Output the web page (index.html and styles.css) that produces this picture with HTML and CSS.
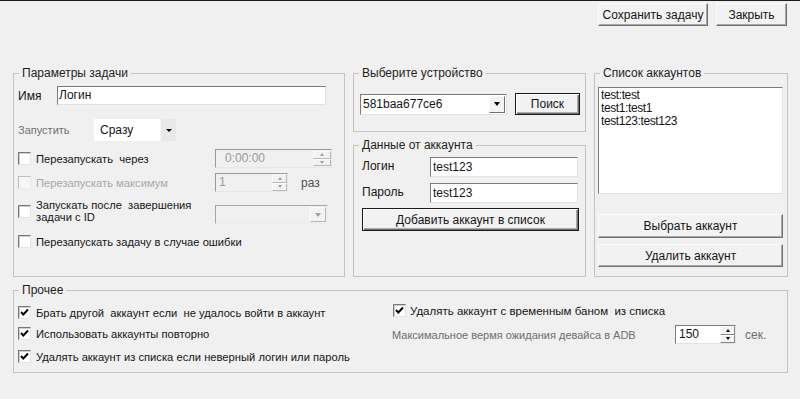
FILE: index.html
```html
<!DOCTYPE html>
<html lang="ru">
<head>
    <meta charset="UTF-8">
    <title>Параметры задачи</title>
    <link rel="stylesheet" href="styles.css">
</head>
<body>
    <div class="toolbar">
        <button class="btn save">Сохранить задачу</button>
        <button class="btn close">Закрыть</button>
    </div>

    <div class="main">
        <!-- Task settings -->
        <fieldset class="group task">
            <legend>Параметры задачи</legend>
            <div class="name-row">
                <span class="lbl">Имя</span>
                <div class="field name-field">Логин</div>
            </div>
            <div class="start-row">
                <span class="lbl muted">Запустить</span>
                <div class="combo flat"><span class="val">Сразу</span><span class="drop"><i class="tri"></i></span></div>
            </div>
            <div class="opts">
                <div class="opt"><span class="check"></span><span>Перезапускать&nbsp; через</span></div>
                <div class="spin w117 disabled"><span class="val pad">0:00:00</span><span class="arrows small"><i class="up"></i><i class="dn"></i></span></div>

                <div class="opt disabled"><span class="check disabled"></span><span>Перезапускать максимум</span></div>
                <div class="spin-line">
                    <div class="spin w73 disabled"><span class="val">1</span><span class="arrows"><i class="up"></i><i class="dn"></i></span></div>
                    <span class="unit">раз</span>
                </div>

                <div class="opt two"><span class="check"></span><span>Запускать после&nbsp; завершения<br>задачи с ID</span></div>
                <div class="combo w113 disabled"><span class="val"></span><span class="drop btnlike"><i class="tri"></i></span></div>

                <div class="opt last"><span class="check"></span><span>Перезапускать задачу в случае ошибки</span></div>
            </div>
        </fieldset>

        <div class="col">
            <fieldset class="group device">
                <legend>Выберите устройство</legend>
                <div class="device-row">
                    <div class="combo w147"><span class="val">581baa677ce6</span><span class="drop btnlike"><i class="tri"></i></span></div>
                    <button class="btn default search">Поиск</button>
                </div>
            </fieldset>
            <fieldset class="group account">
                <legend>Данные от аккаунта</legend>
                <div class="acc-row first">
                    <span class="lbl">Логин</span>
                    <div class="field acc-field">test123</div>
                </div>
                <div class="acc-row">
                    <span class="lbl">Пароль</span>
                    <div class="field acc-field">test123</div>
                </div>
                <button class="btn default add">Добавить аккаунт в список</button>
            </fieldset>
        </div>

        <fieldset class="group accounts">
            <legend>Список аккаунтов</legend>
            <div class="listbox">
                <div>test:test</div>
                <div>test1:test1</div>
                <div>test123:test123</div>
            </div>
            <button class="btn wide pick">Выбрать аккаунт</button>
            <button class="btn wide remove">Удалить аккаунт</button>
        </fieldset>
    </div>

    <!-- Misc -->
    <fieldset class="group other">
        <legend>Прочее</legend>
        <div class="other-grid">
            <div class="other-left">
                <div class="opt r1"><span class="check on"><svg width="11" height="11" viewBox="0 0 11 11"><polyline points="2,5 4.3,7.5 9,2.5" fill="none" stroke="#000" stroke-width="1.9"/></svg></span><span>Брать другой&nbsp; аккаунт если&nbsp; не удалось войти в аккаунт</span></div>
                <div class="opt r2"><span class="check on"><svg width="11" height="11" viewBox="0 0 11 11"><polyline points="2,5 4.3,7.5 9,2.5" fill="none" stroke="#000" stroke-width="1.9"/></svg></span><span>Использовать аккаунты повторно</span></div>
                <div class="opt r3"><span class="check on"><svg width="11" height="11" viewBox="0 0 11 11"><polyline points="2,5 4.3,7.5 9,2.5" fill="none" stroke="#000" stroke-width="1.9"/></svg></span><span>Удалять аккаунт из списка если неверный логин или пароль</span></div>
            </div>
            <div class="other-right">
                <div class="opt r1"><span class="check on"><svg width="11" height="11" viewBox="0 0 11 11"><polyline points="2,5 4.3,7.5 9,2.5" fill="none" stroke="#000" stroke-width="1.9"/></svg></span><span>Удалять аккаунт с временным баном&nbsp; из списка</span></div>
                <div class="wait-row">
                    <span class="wait-lbl">Максимальное вермя ожидания девайса в ADB</span>
                    <div class="spin w61"><span class="val">150</span><span class="arrows"><i class="up"></i><i class="dn"></i></span></div>
                    <span class="unit sec">сек.</span>
                </div>
            </div>
        </div>
    </fieldset>
</body>
</html>
```

FILE: styles.css
```css
* {
    box-sizing: border-box;
}
body {
    margin: 0;
    height: 399px;
    overflow: hidden;
    background: #f0f0f0;
    border-top: 1px solid #1c1c1c;
    font-family: 'Liberation Sans', Arial, sans-serif;
    font-size: 11px;
    color: #151515;
}
.toolbar {
    display: flex;
    justify-content: flex-end;
    gap: 8px;
    padding: 2px 13px 0 0;
}
.btn {
    font: inherit;
    font-size: 12px;
    color: inherit;
    height: 23px;
    padding: 0;
    background: #f2f2f2;
    border: 1px solid;
    border-color: #fbfbfb #6f6f6f #6f6f6f #fbfbfb;
    box-shadow: inset -1px -1px 0 #a9a9a9;
}
.btn.default {
    border-color: #1a1a1a;
    box-shadow: inset 1px 1px 0 #fff, inset -1px -1px 0 #6f6f6f, inset -2px -2px 0 #a9a9a9;
}
.save { width: 110px; }
.close { width: 71px; }

/* Group boxes */
.group {
    margin: 0;
    padding: 0 4px 4px;
    border: 1px solid #c3c3c3;
    min-width: 0;
}
.group legend {
    padding: 0 3px;
    margin-left: 1px;
    line-height: 14px;
    font-size: 12px;
    color: #1e1e1e;
}
.main {
    display: grid;
    grid-template-columns: 332px 233px 194px;
    column-gap: 8px;
    margin: 40px 0 0 13px;
    height: 211px;
}
.col {
    display: flex;
    flex-direction: column;
    gap: 6px;
}
.device {
    height: 66px;
    flex: none;
}
.account {
    flex: 1;
}

/* Fields */
.field {
    background: #fff;
    border: 1px solid;
    border-color: #7a7a7a #e2e2e2 #e2e2e2 #7a7a7a;
    padding: 0 2px;
    white-space: nowrap;
    font-size: 12px;
}
.lbl {
    flex: none;
    font-size: 12px;
}
.muted {
    color: #707070;
}
.name-row {
    display: flex;
    align-items: center;
    margin-top: 6px;
}
.name-row .lbl {
    width: 39px;
}
.name-field {
    width: 269px;
    height: 19px;
    line-height: 17px;
    padding-left: 1px;
}
.start-row {
    display: flex;
    align-items: center;
    margin-top: 14px;
}
.start-row .lbl {
    width: 76px;
    font-size: 11px;
}

/* Combo boxes */
.combo {
    display: flex;
    height: 21px;
    background: #fff;
    border: 1px solid;
    border-color: #7a7a7a #e2e2e2 #e2e2e2 #7a7a7a;
}
.combo .val {
    flex: 1;
    line-height: 19px;
    padding-left: 2px;
    white-space: nowrap;
    font-size: 12px;
}
.combo .drop {
    width: 16px;
    display: flex;
    align-items: center;
    justify-content: center;
}
.drop.btnlike {
    margin: 1px;
    background: #f2f2f2;
    border: 1px solid;
    border-color: #fbfbfb #6f6f6f #6f6f6f #fbfbfb;
}
.tri {
    width: 0;
    height: 0;
    border-left: 3.5px solid transparent;
    border-right: 3.5px solid transparent;
    border-top: 4px solid #000;
}
.combo.flat {
    width: 82px;
    height: 22px;
    border: none;
}
.combo.flat .val {
    line-height: 22px;
    padding-left: 6px;
}
.combo.flat .drop {
    background: #e9e9e9;
    border-left: 1px solid #f7f7f7;
}
.combo.flat .tri {
    border-left-width: 3px;
    border-right-width: 3px;
    border-top-width: 3px;
}
.combo.disabled {
    background: #f0f0f0;
    border-color: #a6a6a6 #ececec #ececec #a6a6a6;
}
.combo.disabled .drop {
    border-color: #fbfbfb #b5b5b5 #b5b5b5 #fbfbfb;
}
.combo.disabled .tri {
    border-top-color: #a0a0a0;
}
.w113 { width: 113px; height: 19px; margin-top: 5px; }
.w147 { width: 147px; }

/* Options grid */
.opts {
    display: grid;
    grid-template-columns: 197px auto;
    grid-template-rows: 19px 19px 30px 19px;
    row-gap: 5px;
    margin-top: 8px;
    align-items: center;
}
.opt {
    display: flex;
    align-items: center;
    gap: 5px;
    white-space: nowrap;
    font-size: 11.2px;
}
.opt.disabled {
    color: #a8a8a8;
}
.opt.two {
    line-height: 12px;
    margin-top: -2px;
}
.opt.last {
    grid-column: 1 / 3;
}
.check {
    width: 13px;
    height: 13px;
    flex: none;
    background: #fff;
    border: 1px solid;
    border-color: #777 #e4e4e4 #e4e4e4 #777;
    box-shadow: inset 1px 1px 0 #cfcfcf;
}
.check.disabled {
    border-color: #bdbdbd #ececec #ececec #bdbdbd;
    box-shadow: none;
    background: #f6f6f6;
}
.check svg {
    display: block;
}

/* Spinners */
.spin {
    display: flex;
    height: 19px;
    background: #fff;
    border: 1px solid;
    border-color: #7a7a7a #e2e2e2 #e2e2e2 #7a7a7a;
}
.spin .val {
    flex: 1;
    line-height: 17px;
    padding-left: 3px;
    font-size: 12px;
}
.spin .val.pad {
    padding-left: 9px;
}
.spin.disabled {
    background: #f0f0f0;
    border-color: #9a9a9a #e8e8e8 #e8e8e8 #9a9a9a;
    color: #9a9a9a;
}
.arrows {
    width: 15px;
    display: flex;
    flex-direction: column;
}
.arrows i {
    flex: 1;
    display: flex;
    align-items: center;
    justify-content: center;
    background: #f2f2f2;
    border: 1px solid;
    border-color: #fbfbfb #8a8a8a #8a8a8a #fbfbfb;
}
.arrows i::before {
    content: '';
    border-left: 2.5px solid transparent;
    border-right: 2.5px solid transparent;
}
.arrows .up::before {
    border-bottom: 3px solid #000;
}
.arrows .dn::before {
    border-top: 3px solid #000;
}
.spin.disabled .arrows i {
    border-color: #fbfbfb #b8b8b8 #b8b8b8 #fbfbfb;
}
.spin.disabled .arrows i::before {
    border-top-color: #a0a0a0;
    border-bottom-color: #a0a0a0;
}
.arrows.small {
    width: 18px;
    padding: 1px 0;
}
.w117 { width: 117px; }
.w73 { width: 73px; }
.w61 { width: 61px; }
.spin-line {
    display: flex;
    align-items: center;
    gap: 13px;
}
.unit {
    color: #505050;
    font-size: 12px;
}

/* Device */
.device-row {
    display: flex;
    align-items: center;
    gap: 8px;
    margin: 13px 0 0 2px;
}
.search {
    width: 65px;
    height: 22px;
}

/* Account data */
.acc-row {
    display: flex;
    align-items: center;
    margin: 6px 0 0 4px;
}
.acc-row.first {
    margin-top: 5px;
}
.acc-row .lbl {
    width: 68px;
    margin-top: -3px;
}
.acc-field {
    width: 148px;
    height: 20px;
    line-height: 18px;
}
.add {
    display: block;
    width: 217px;
    margin: 5px 0 0 4px;
}

/* Accounts list */
.accounts {
    display: flex;
    flex-direction: column;
}
.listbox {
    height: 107px;
    margin: 7px 0 0 -1px;
    background: #fff;
    border: 1px solid;
    border-color: #7a7a7a #e2e2e2 #e2e2e2 #7a7a7a;
    padding: 1px 2px;
    font-size: 12px;
    line-height: 13px;
    letter-spacing: -0.4px;
}
.btn.wide {
    width: 185px;
    margin-left: -1px;
}
.pick {
    margin-top: 20px;
    height: 24px;
}
.remove {
    margin-top: 6px;
}

/* Misc group */
.other {
    margin: 6px 0 0 13px;
    width: 775px;
    height: 90px;
}
.other-grid {
    display: grid;
    grid-template-columns: 374px auto;
}
.other .r1 {
    margin-top: 9px;
}
.other-left .r2 {
    margin-top: 8px;
}
.other-left .r3 {
    margin-top: 10px;
}
.other-right .opt {
    gap: 4px;
    margin-left: 1px;
    font-size: 11.5px;
}
.other-right .r1 {
    margin-top: 7px;
}
.wait-row {
    display: flex;
    align-items: center;
    margin-top: 8px;
}
.wait-lbl {
    width: 283px;
    color: #6e6e6e;
}
.sec {
    margin-left: 9px;
    color: #6e6e6e;
}
```
